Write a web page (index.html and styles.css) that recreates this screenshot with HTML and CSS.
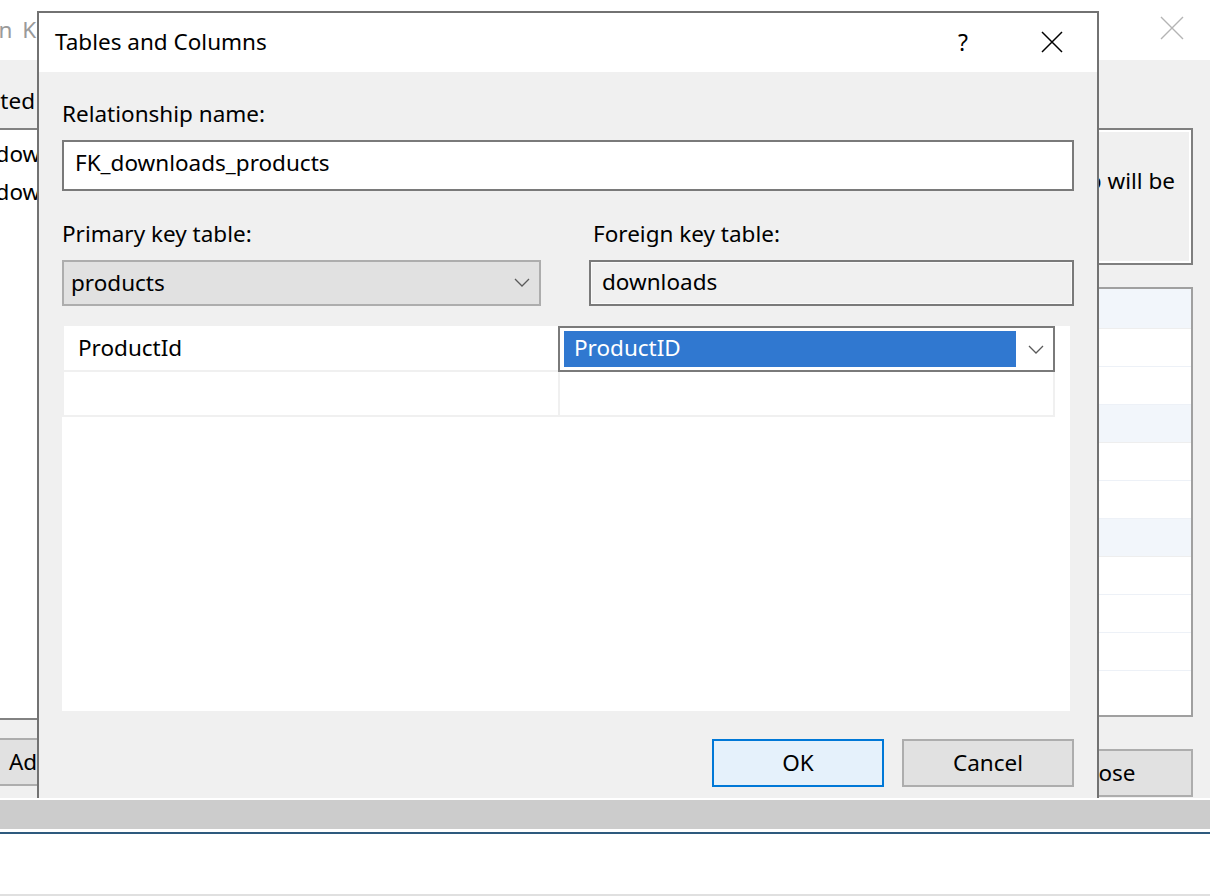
FILE: index.html
```html
<!DOCTYPE html>
<html lang="en">
<head>
<meta charset="utf-8">
<title>Tables and Columns</title>
<link rel="stylesheet" href="styles.css">
</head>
<body>
<div class="screen">
  <div class="bg-window">
    <div class="bg-titlebar">
      <span class="bg-title">Foreign Key Relationships</span>
      <svg class="bg-close" width="24" height="24" viewBox="0 0 24 24"><path d="M1 1 L23 23 M23 1 L1 23" stroke="#b4b4b4" stroke-width="1.4" fill="none"/></svg>
    </div>
    <div class="bg-body">
      <div class="bg-left">
        <div class="bg-label">Selected Relationship:</div>
        <div class="bg-list">
          <div class="bg-list-item">FK_downloads_products*</div>
          <div class="bg-list-item">FK_downloads_users</div>
        </div>
        <div class="bg-left-buttons">
          <button class="win-btn">Add</button>
          <button class="win-btn">Delete</button>
        </div>
      </div>
      <div class="bg-right">
        <div class="bg-desc">
          <div class="desc-line">Editing properties for new</div>
          <div class="desc-line desc-line-end">relationship will be</div>
          <div class="desc-line">accepted.</div>
        </div>
        <div class="prop-grid">
          <div class="prop-row category"></div>
          <div class="prop-row"></div>
          <div class="prop-row"></div>
          <div class="prop-row category"></div>
          <div class="prop-row"></div>
          <div class="prop-row"></div>
          <div class="prop-row category"></div>
          <div class="prop-row"></div>
          <div class="prop-row"></div>
          <div class="prop-row"></div>
        </div>
        <div class="bg-right-buttons">
          <button class="win-btn close-btn">Close</button>
        </div>
      </div>
    </div>
  </div>
  <div class="host-bar">
    <div class="host-gray"></div>
    <div class="host-line"></div>
    <div class="host-white"></div>
  </div>

  <div class="dialog">
    <div class="dlg-titlebar">
      <span class="dlg-title">Tables and Columns</span>
      <span class="dlg-help">?</span>
      <svg class="dlg-close" width="22" height="22" viewBox="0 0 22 22"><path d="M1 1 L21 21 M21 1 L1 21" stroke="#000" stroke-width="1.5" fill="none"/></svg>
    </div>
    <div class="dlg-body">
      <div class="field-label">Relationship name:</div>
      <div class="textbox">FK_downloads_products</div>
      <div class="key-tables">
        <div class="key-col">
          <div class="field-label">Primary key table:</div>
          <div class="combo">
            <span class="combo-text">products</span>
            <svg class="chevron" width="16" height="9" viewBox="0 0 16 9"><path d="M1 1 L8 8 L15 1" stroke="#5a5a5a" stroke-width="1.3" fill="none"/></svg>
          </div>
        </div>
        <div class="key-col">
          <div class="field-label field-label-fk">Foreign key table:</div>
          <div class="textbox readonly">downloads</div>
        </div>
      </div>
      <div class="columns-grid">
        <div class="grid-row">
          <div class="cell">ProductId</div>
          <div class="cell cell-edit">
            <span class="cell-selection">ProductID</span>
            <svg class="chevron" width="16" height="9" viewBox="0 0 16 9"><path d="M1 1 L8 8 L15 1" stroke="#5a5a5a" stroke-width="1.3" fill="none"/></svg>
          </div>
        </div>
        <div class="grid-row">
          <div class="cell"></div>
          <div class="cell"></div>
        </div>
      </div>
      <div class="dlg-buttons">
        <button class="win-btn default-btn">OK</button>
        <button class="win-btn">Cancel</button>
      </div>
    </div>
  </div>
</div>
</body>
</html>
```

FILE: styles.css
```css
* { box-sizing: border-box; }

html, body {
  margin: 0;
  padding: 0;
  background: #ffffff;
}

body {
  font-family: "Noto Sans", "Open Sans", sans-serif;
  font-size: 22.5px;
  color: #000;
  width: 1210px;
  height: 896px;
  overflow: hidden;
}

.screen {
  position: relative;
  width: 1210px;
  height: 896px;
  overflow: hidden;
}

/* ---------- background window ---------- */
.bg-window {
  height: 798px;
  display: flex;
  flex-direction: column;
  background: #f0f0f0;
}

.bg-titlebar {
  height: 60px;
  background: #fff;
  display: flex;
  align-items: center;
  padding-bottom: 2px;
}

.bg-title {
  margin-left: -68px;
  word-spacing: 4px;
  color: #9a9a9a;
  white-space: nowrap;
  flex: 1;
}

.bg-close {
  margin-right: 26px;
  margin-top: -3px;
}

.bg-body {
  flex: 1;
  display: flex;
  justify-content: space-between;
}

.bg-left {
  width: 320px;
  margin-left: -200px;
  display: flex;
  flex-direction: column;
}

.bg-label {
  margin-top: 26px;
  padding-left: 146px;
  height: 30px;
  line-height: 30px;
  white-space: nowrap;
}

.bg-list {
  margin-top: 12px;
  height: 592px;
  background: #fff;
  border-top: 2px solid #828282;
  border-bottom: 2px solid #828282;
  padding-top: 5px;
}

.bg-list-item {
  height: 38px;
  line-height: 38px;
  padding-left: 160px;
  white-space: nowrap;
}

.bg-left-buttons {
  margin-top: 18px;
  padding-left: 144px;
  display: flex;
  gap: 18px;
}

.bg-left-buttons .win-btn {
  flex-shrink: 0;
}

.bg-right {
  width: 430px;
  margin-right: 17px;
  display: flex;
  flex-direction: column;
}

.bg-desc {
  margin-top: 68px;
  height: 137px;
  border: 2px solid #7f7f7f;
  box-shadow: inset 0 0 0 2px #fff;
  padding: 1px 16px 0 10px;
  line-height: 33px;
  white-space: nowrap;
  overflow: hidden;
}

.desc-line-end {
  text-align: right;
}

.prop-grid {
  margin-top: 22px;
  height: 430px;
  background: #fff;
  border: 2px solid #a0a0a0;
  overflow: hidden;
}

.prop-row {
  height: 38px;
  border-bottom: 1px solid #edf1f7;
}

.prop-row:first-child {
  height: 40px;
}

.prop-row.category {
  background: #f2f6fb;
  border-bottom-color: #eeeeee;
}

.bg-right-buttons {
  margin-top: 32px;
  display: flex;
  justify-content: flex-end;
}

.close-btn {
  height: 46px;
  width: 174px;
}

/* ---------- host bar below ---------- */
.host-bar {
  display: flex;
  flex-direction: column;
  padding-top: 2px;
  background: #fff;
  height: 98px;
}

.host-gray {
  height: 29px;
  background: #cccccc;
}

.host-line {
  margin-top: 3px;
  height: 2px;
  background: #2e5a7e;
}

.host-white {
  flex: 1;
  background: #fff;
  border-bottom: 2px solid #e0e0e0;
}

/* ---------- common button ---------- */
.win-btn {
  font-family: inherit;
  font-size: 22.5px;
  color: #000;
  width: 172px;
  height: 48px;
  background: #e1e1e1;
  border: 2px solid #adadad;
  padding: 0;
  margin: 0;
  line-height: 1;
}

.win-btn.default-btn {
  background: #e5f1fb;
  border-color: #0078d7;
}

/* ---------- dialog ---------- */
.dialog {
  position: absolute;
  left: 37px;
  top: 11px;
  width: 1062px;
  height: 787px;
  border: 2px solid #727272;
  border-bottom: none;
  background: #f0f0f0;
  display: flex;
  flex-direction: column;
  overflow: hidden;
}

.dlg-titlebar {
  height: 59px;
  background: #fff;
  display: flex;
  align-items: center;
  padding-left: 16px;
  padding-bottom: 2px;
}

.dlg-title {
  flex: 1;
  white-space: nowrap;
}

.dlg-help {
  font-size: 23px;
  margin-right: 73px;
}

.dlg-close {
  margin-right: 34px;
}

.dlg-body {
  flex: 1;
  padding: 27px 23px 0 23px;
  display: flex;
  flex-direction: column;
}

.field-label {
  height: 30px;
  line-height: 30px;
  white-space: nowrap;
}

.field-label-fk {
  padding-left: 4px;
}

.textbox {
  margin-top: 11px;
  height: 51px;
  border: 2px solid #7a7a7a;
  background: #fff;
  padding-left: 11px;
  display: flex;
  align-items: center;
  padding-bottom: 6px;
  white-space: nowrap;
}

.textbox.readonly {
  height: 46px;
  background: #f0f0f0;
  box-shadow: inset 0 0 0 1px #fafafa;
  padding-bottom: 4px;
}

.key-tables {
  margin-top: 28px;
  display: grid;
  grid-template-columns: 479px 1fr;
  column-gap: 48px;
}

.combo {
  margin-top: 11px;
  height: 46px;
  border: 2px solid #adadad;
  background: #e1e1e1;
  display: flex;
  align-items: center;
  justify-content: space-between;
  padding: 0 9px 2px 7px;
}

.columns-grid {
  margin-top: 20px;
  height: 385px;
  margin-right: 4px;
  background: #fff;
}

.grid-row {
  display: grid;
  grid-template-columns: 496px 497px;
  height: 46px;
}

.grid-row + .grid-row {
  height: 45px;
}

.cell {
  border-bottom: 2px solid #f0f0f0;
  border-left: 2px solid #f0f0f0;
  display: flex;
  align-items: center;
  padding-left: 14px;
  padding-bottom: 2px;
  white-space: nowrap;
}

.cell + .cell {
  border-right: 2px solid #f0f0f0;
}

.cell.cell-edit {
  border: 2px solid #7a7a7a;
  padding: 3px 9px 3px 4px;
  justify-content: space-between;
}

.cell-selection {
  width: 452px;
  height: 36px;
  background: #3078d0;
  color: #fff;
  padding-left: 10px;
  line-height: 34px;
}

.dlg-buttons {
  margin-top: 28px;
  display: flex;
  justify-content: flex-end;
  gap: 18px;
}
```
